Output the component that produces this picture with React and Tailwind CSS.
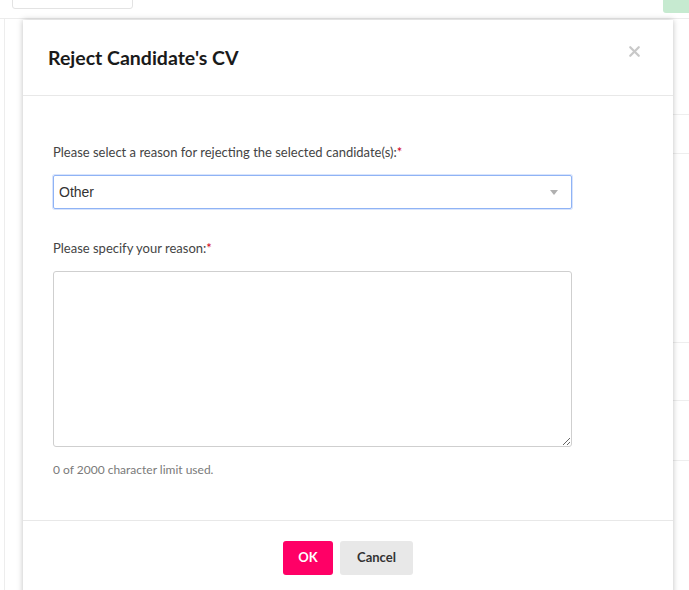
import { X } from 'lucide-react';

export default function App() {
  return (
    <div className="relative h-[590px] w-full overflow-hidden bg-white font-['Lato',sans-serif]">
      {/* page behind the dialog */}
      <div className="flex h-[19px] items-end justify-between border-b border-[#ececec] bg-white">
        <div className="ml-3 h-[29px] w-[121px] -mt-5 self-start rounded-[3px] border border-[#e3e3e3] bg-white" />
        <div className="h-[13px] w-[26px] self-start rounded-bl-[3px] bg-[#c6ead0]" />
      </div>
      <div className="ml-[4px] flex h-[571px] border-l border-[#ededed]">
        <div className="flex-1" />
        <div className="w-[40px]">
          <div className="h-[96px] border-b border-[#eeeeee]" />
          <div className="h-[39px] border-b border-[#eeeeee]" />
          <div className="h-[189px] border-b border-[#eeeeee]" />
          <div className="h-[58px] border-b border-[#eeeeee]" />
          <div className="h-[60px] border-b border-[#eeeeee]" />
        </div>
      </div>

      {/* modal */}
      <div className="absolute left-[23px] top-[20px] w-[650px] bg-white shadow-[0_0_6px_rgba(0,0,0,0.25)]">
        <div className="relative flex h-[76px] items-center border-b border-[#e8e8e8] pl-[25px]">
          <h2 className="text-[19.5px] font-bold leading-6 text-[#1a1a1a]">Reject Candidate's CV</h2>
          <button className="absolute right-[30px] top-[23px] text-[#c8c8c8]">
            <X className="h-[17px] w-[17px]" strokeWidth={3.2} />
          </button>
        </div>

        <div className="px-[30px] pb-[42px] pt-[47px]">
          <label className="block text-[13px] leading-[18px] text-[#444]">
            Please select a reason for rejecting the selected candidate(s):<span className="text-[#d0021b]">*</span>
          </label>
          <div className="mt-[14px] flex h-[34px] w-[519px] items-center justify-between rounded-[2px] border border-[#8fb3f5] pl-[5px] pr-[13px] shadow-[0_0_0_1px_rgba(143,179,245,0.35)]">
            <span className="font-['Liberation_Sans',sans-serif] text-[14px] text-[#333]">Other</span>
            <span className="h-0 w-0 border-x-[4px] border-t-[5px] border-x-transparent border-t-[#b0b0b0]" />
          </div>

          <label className="mt-[30px] block text-[13px] leading-[18px] text-[#444]">
            Please specify your reason:<span className="text-[#d0021b]">*</span>
          </label>
          <textarea className="mt-[14px] block h-[176px] w-[519px] rounded-[3px] border border-[#cfcfcf] outline-none" />

          <p className="mt-[15px] text-[12px] leading-4 text-[#7a7a7a]">0 of 2000 character limit used.</p>
        </div>

        <div className="flex justify-center gap-[7px] border-t border-[#e8e8e8] pb-[30px] pt-[20px]">
          <button className="h-[34px] w-[50px] rounded-[3px] bg-[#ff0066] text-[13px] font-bold text-white">OK</button>
          <button className="h-[34px] w-[73px] rounded-[3px] bg-[#e8e8e8] text-[13px] font-bold text-[#333]">Cancel</button>
        </div>
      </div>
    </div>
  );
}
